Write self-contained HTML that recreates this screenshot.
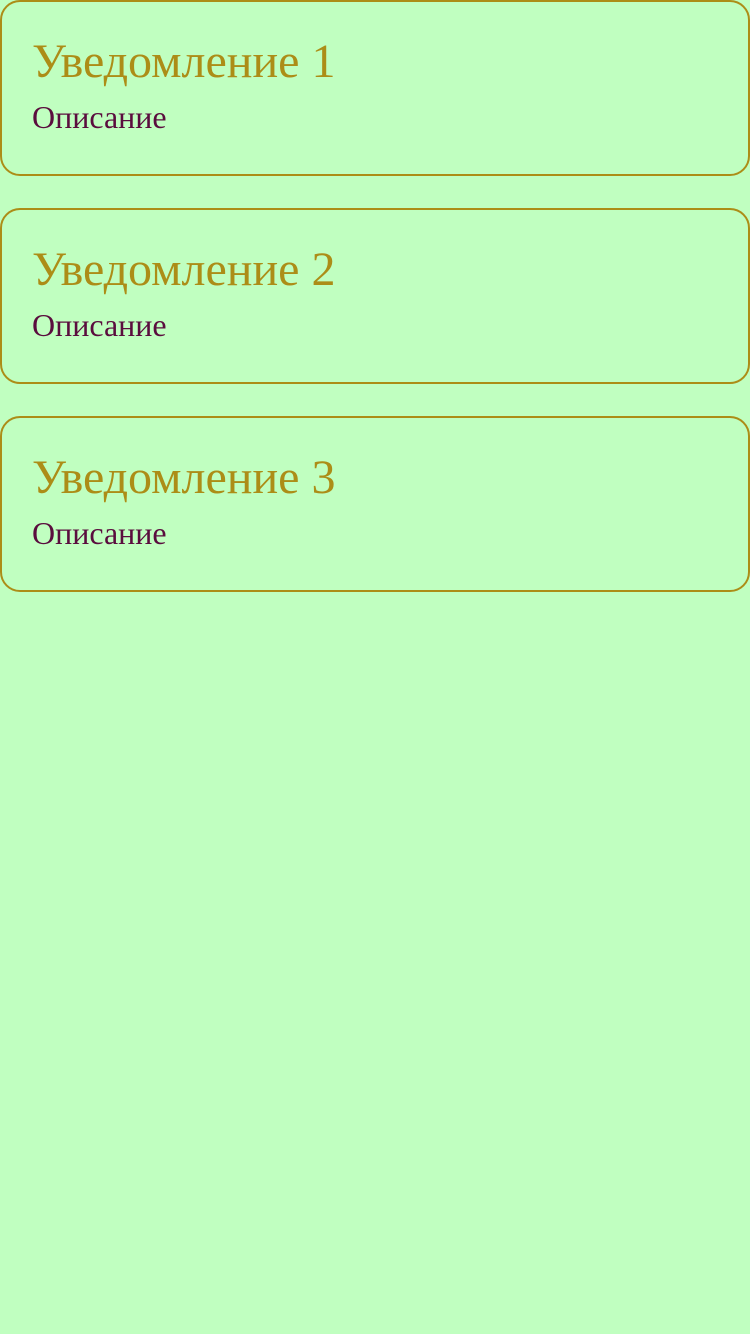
<!DOCTYPE html>
<html><head><meta charset="utf-8"><style>
html,body{margin:0;padding:0;background:#c0ffc0;width:750px;height:1334px;overflow:hidden;}
.card{box-sizing:border-box;width:750px;height:176px;border:2px solid #ac8d17;border-radius:20px;margin-bottom:32px;padding:36px 0 0 30px;font-family:"Liberation Serif",serif;}
.t{font-size:48px;line-height:48px;color:#ac8d17;height:48px;}
.d{font-size:32px;line-height:32px;color:#5a0d3e;margin-top:15px;}
</style></head><body>
<div class="card"><div class="t">Уведомление 1</div><div class="d">Описание</div></div>
<div class="card"><div class="t">Уведомление 2</div><div class="d">Описание</div></div>
<div class="card"><div class="t">Уведомление 3</div><div class="d">Описание</div></div>
</body></html>
